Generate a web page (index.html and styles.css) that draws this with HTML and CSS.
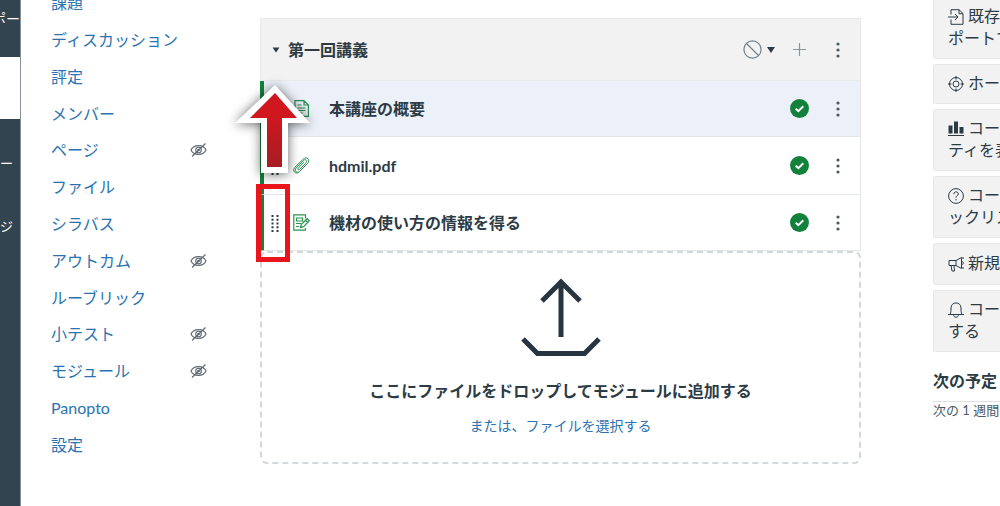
FILE: index.html
```html
<!DOCTYPE html>
<html lang="ja">
<head>
<meta charset="utf-8">
<title>モジュール</title>
<link rel="stylesheet" href="styles.css">
</head>
<body>
<svg class="defs" aria-hidden="true">
  <symbol id="eye-off" viewBox="0 0 17 16"><g fill="none" stroke="currentColor" stroke-width="1.100"><path d="M1 8C3.500 2.200 13.500 2.200 16 8C13.500 13.800 3.500 13.800 1 8Z"/><circle cx="8.500" cy="8" r="2.800"/><circle cx="8.500" cy="8" r=".8"/><path d="M2 14.500L15.500 1.500"/></g></symbol>
  <symbol id="kebab" viewBox="0 0 6 18"><g fill="currentColor"><circle cx="3" cy="3" r="1.600"/><circle cx="3" cy="9" r="1.600"/><circle cx="3" cy="15" r="1.600"/></g></symbol>
  <symbol id="check" viewBox="0 0 19 19"><circle cx="9.500" cy="9.500" r="9.500" fill="#12813c"/><path d="M5.700 9.700L8.400 12.100L13.300 7.200" fill="none" stroke="#fff" stroke-width="2"/></symbol>
  <symbol id="grip" viewBox="0 0 8 18"><path d="M1.500 1v17M6.500 1v17" stroke="currentColor" stroke-width="2" stroke-dasharray="2 1.750" fill="none"/></symbol>
</svg>
<div class="app">
  <nav class="global" aria-label="グローバル">
    <a class="global-item" href="#">ポー</a>
    <span class="global-current"></span>
    <a class="global-item global-item-first" href="#">ー</a>
    <a class="global-item global-item-next" href="#">ジ</a>
  </nav>
  <nav class="course" aria-label="コース">
    <a href="#">課題</a>
    <a href="#">ディスカッション</a>
    <a href="#">評定</a>
    <a href="#">メンバー</a>
    <a href="#">ページ<svg class="eye"><use href="#eye-off"/></svg></a>
    <a href="#">ファイル</a>
    <a href="#">シラバス</a>
    <a href="#">アウトカム<svg class="eye"><use href="#eye-off"/></svg></a>
    <a href="#">ルーブリック</a>
    <a href="#">小テスト<svg class="eye"><use href="#eye-off"/></svg></a>
    <a href="#">モジュール<svg class="eye"><use href="#eye-off"/></svg></a>
    <a href="#">Panopto</a>
    <a href="#">設定</a>
  </nav>
  <main class="module">
    <header class="module-head">
      <button class="toggle" type="button"><svg width="8" height="6"><path d="M0.500 0.500h7L4 5.500z" fill="#2d3b45"/></svg>第一回講義</button>
      <button class="publish" type="button" aria-label="公開状態"><svg width="19" height="19" viewBox="0 0 19 19"><g fill="none" stroke="#74808a" stroke-width="1.200"><circle cx="9.500" cy="9.500" r="8.600"/><path d="M3.500 3.500L15.500 15.500"/></g></svg><svg width="8" height="6"><path d="M0 0h8L4 6z" fill="#2d3b45"/></svg></button>
      <button class="tool" type="button" aria-label="追加"><svg width="13" height="13"><path d="M6.500 0v13M0 6.500h13" stroke="#8b959d" stroke-width="1.200"/></svg></button>
      <button class="tool" type="button" aria-label="メニュー"><svg width="6" height="18"><use href="#kebab"/></svg></button>
    </header>
    <ul class="items">
      <li class="item item-active">
        <svg class="grip"><use href="#grip"/></svg>
        <svg class="kind" viewBox="0 0 17 17"><g fill="none" stroke="#2a9150" stroke-width="1.200"><path d="M2 .6h9l4.400 4.400v11.400H2zM11 .6V5h4.400M4.500 5h4M4.500 8h8M4.500 10.500h8M4.500 13h5"/></g></svg>
        <a class="item-name" href="#">本講座の概要</a>
        <button class="tool" type="button" aria-label="公開済み"><svg width="19" height="19"><use href="#check"/></svg></button>
        <button class="tool" type="button" aria-label="メニュー"><svg width="6" height="18"><use href="#kebab"/></svg></button>
      </li>
      <li class="item item-tall">
        <svg class="grip"><use href="#grip"/></svg>
        <svg class="kind" viewBox="0 0 17 17"><path d="M10.800 5.200L5.200 11.200C4.200 12.300 5.500 13.500 6.500 12.500L13 5.800C14.800 3.800 12.300 1.600 10.500 3.400L3.200 10.900C.6 13.700 4 17 6.700 14.300L14.500 6.500C18 2.800 13.800-1.200 10.200 2.200L2 10.200C-1.200 13.600 2.200 17.500 5.600 15.400" fill="none" stroke="#2a9150" stroke-width="1"/></svg>
        <a class="item-name" href="#">hdmil.pdf</a>
        <button class="tool" type="button" aria-label="公開済み"><svg width="19" height="19"><use href="#check"/></svg></button>
        <button class="tool" type="button" aria-label="メニュー"><svg width="6" height="18"><use href="#kebab"/></svg></button>
      </li>
      <li class="item">
        <svg class="grip"><use href="#grip"/></svg>
        <svg class="kind" viewBox="0 0 17 17"><g fill="none" stroke="#2a9150" stroke-width="1.200"><path d="M12.500 4.500V.8H.8v15.400h11.700V14M3.500 4h6v3h-6zM3 9.500h5M3 12.500h3M7.500 13.500l.8-3.200 5.900-5.600 2.100 2.200-5.800 5.700zM12.500 6.300l2 2.200"/></g></svg>
        <a class="item-name" href="#">機材の使い方の情報を得る</a>
        <button class="tool" type="button" aria-label="公開済み"><svg width="19" height="19"><use href="#check"/></svg></button>
        <button class="tool" type="button" aria-label="メニュー"><svg width="6" height="18"><use href="#kebab"/></svg></button>
      </li>
    </ul>
    <section class="drop">
      <svg class="dash" aria-hidden="true"><rect x="1" y="1" rx="6"/></svg>
      <svg width="80" height="79" viewBox="0 0 80 79"><g fill="none" stroke="#273540" stroke-width="5"><path d="M40 59V4M21 23L40 4L59 23M2 61L16.500 75.500H63.500L78 61"/></g></svg>
      <strong class="drop-title">ここにファイルをドロップしてモジュールに追加する</strong>
      <a class="drop-link" href="#">または、ファイルを選択する</a>
    </section>
    <svg class="arrow" viewBox="0 0 115 130" aria-hidden="true">
      <defs><linearGradient id="red" x1="0" y1="0" x2="0" y2="1"><stop offset="0.300" stop-color="#cf171d"/><stop offset="1" stop-color="#a61e24"/></linearGradient></defs>
      <path class="arrow-edge" d="M55 20L90 58H68V108H41V58H15Z" fill="#fff"/>
      <path d="M55 28L77 53H62V102H47V53H30Z" fill="url(#red)"/>
    </svg>
    <span class="marker"></span>
  </main>
  <aside class="side">
    <button class="card" type="button"><svg viewBox="0 0 16 16"><path d="M3 5.500V.7h8L15 4.500v10.800H3V10.500M11 .7v4h4M0 8h10M7 5l3 3-3 3"/></svg>既存<br>ポートす</button>
    <button class="card" type="button"><svg viewBox="0 0 16 16"><circle cx="8" cy="8" r="6.500"/><circle cx="8" cy="8" r="3"/><path d="M8 0v3.500M8 12.500V16M0 8h3.500M12.500 8H16"/></svg>ホー</button>
    <button class="card" type="button"><svg viewBox="0 0 16 16"><path d="M0 14.500h16"/><path d="M.5 4.500h4v8h-4zM6 .5h4v12H6zM11.500 6h4v6.500h-4z" fill="#2d3b45" stroke="none"/></svg>コー<br>ティを表</button>
    <button class="card" type="button"><svg viewBox="0 0 16 16"><circle cx="8" cy="8" r="7.400"/><path d="M5.700 6.200C5.700 3 10.500 3.200 10.300 6C10.200 7.600 8 7.600 8 9.700M8 11v1.400"/></svg>コー<br>ックリス</button>
    <button class="card card-tall" type="button"><svg viewBox="0 0 16 16"><path d="M1 4.500h7L13.500 1.500v11L8 9.500H1zM8 4.500v5M3 9.500l1 5.500h2.500L6 9.500M13.500 5.500c2.500 0 2.500 3 0 3M15 1v2M15 11v2"/></svg>新規</button>
    <button class="card" type="button"><svg viewBox="0 0 16 16"><path d="M0 12.500h16M2 12.500C3 10.500 3 9 3 6C3-.8 13-.8 13 6C13 9 13 10.500 14 12.500M5.500 12.500C5.500 16.200 10.500 16.200 10.500 12.500"/></svg>コー<br>する</button>
    <h2 class="side-title">次の予定</h2>
    <p class="side-note">次の 1 週間</p>
  </aside>
</div>
</body>
</html>
```

FILE: styles.css
```css
* { box-sizing: border-box; }
body {
  margin: 0;
  overflow: hidden;
  background: #fff;
  color: #2d3b45;
  font: 16px/22px Lato, "Noto Sans CJK JP", sans-serif;
}
a { color: #2b73b0; text-decoration: none; }
button {
  border: 0;
  padding: 0;
  background: none;
  color: inherit;
  font: inherit;
  cursor: pointer;
}
svg { flex: none; }
.defs { position: absolute; width: 0; height: 0; }
.app { display: flex; height: 100vh; overflow: hidden; }

.global {
  display: flex;
  flex-direction: column;
  flex: none;
  width: 21px;
  overflow: hidden;
  background: #334451;
  border-right: 1px solid #8a949c;
  white-space: nowrap;
}
.global-item {
  display: flex;
  justify-content: flex-end;
  padding-top: 8px;
  color: #fff;
  font-size: 14px;
}
.global-current { height: 62px; margin-top: 27px; margin-right: -1px; background: #fff; flex: none; }
.global-item-first { justify-content: flex-start; padding-top: 33px; font-size: 13px; }
.global-item-next { justify-content: flex-start; padding-top: 41px; font-size: 13px; }

.course {
  display: grid;
  grid-auto-rows: 1fr;
  flex: none;
  width: 156px;
  height: 478px;
  margin: -15px 0 0 30px;
}
.course a { display: flex; align-items: center; justify-content: space-between; }
.eye { width: 17px; height: 16px; color: #5c6770; }

.module { position: relative; flex: 1; margin: 18px 72px 0 53px; }
.module-head {
  display: flex;
  align-items: center;
  gap: 9px;
  height: 63px;
  padding: 0 7px 0 11px;
  background: #f2f2f2;
  border: 1px solid #e8eaec;
}
.toggle {
  display: flex;
  align-items: center;
  gap: 8px;
  margin-right: auto;
  font-weight: 700;
}
.publish { display: flex; align-items: center; gap: 5px; }
.tool {
  display: flex;
  align-items: center;
  justify-content: center;
  width: 30px;
  height: 30px;
  color: #4b5963;
}
.items { margin: 0; padding: 0; list-style: none; }
.item {
  display: flex;
  align-items: center;
  gap: 9px;
  height: 56px;
  padding: 0 7px 0 7px;
  border: 1px solid #e3e6e8;
  border-width: 0 1px 1px 0;
  border-left: 4px solid #12813c;
}
.item-active { background: #ecf1f9; }
.item-tall { height: 58px; }
.grip { width: 8px; height: 18px; }
.kind { width: 17px; height: 17px; margin: 0 10px 0 5px; }
.item-name { margin-right: auto; color: #2d3b45; font-weight: 700; }

.drop {
  position: relative;
  display: flex;
  flex-direction: column;
  align-items: center;
  height: 213px;
  padding-top: 27px;
}
.dash { position: absolute; inset: 0; width: 100%; height: 100%; }
.dash rect {
  width: calc(100% - 2px);
  height: calc(100% - 2px);
  fill: none;
  stroke: #d3d8db;
  stroke-width: 2px;
  stroke-dasharray: 6px 4px;
}
.drop-title { margin-top: 23px; }
.drop-link { position: relative; margin-top: 13px; font-size: 14px; }

.arrow { position: absolute; left: -40px; top: 47px; width: 115px; height: 130px; overflow: visible; }
.arrow-edge { filter: drop-shadow(0 1px 6px rgba(0, 0, 0, .6)); }
.marker {
  position: absolute;
  left: -4px;
  top: 166px;
  width: 34px;
  height: 78px;
  border: 5px solid #e9151b;
}

.side {
  display: flex;
  flex-direction: column;
  gap: 5px;
  flex: none;
  width: 67px;
  margin-top: -3px;
  overflow: hidden;
  white-space: nowrap;
}
.card {
  flex: none;
  padding: 7px 0 9px 14px;
  background: #f2f2f2;
  border: 1px solid #e5e7e9;
  border-right: 0;
  border-radius: 3px 0 0 3px;
  text-align: left;
}
.card-tall { padding-top: 8px; padding-bottom: 10px; }
.card svg {
  width: 16px;
  height: 16px;
  margin-right: 4px;
  vertical-align: -3px;
  fill: none;
  stroke: #2d3b45;
}
.side-title {
  margin: 13px 0 0;
  padding-bottom: 9px;
  border-bottom: 1px solid #dde1e4;
  font-size: 16px;
  line-height: 22px;
}
.side-note { margin: -8px 0 0; font-size: 13px; color: #4b5963; }
```
